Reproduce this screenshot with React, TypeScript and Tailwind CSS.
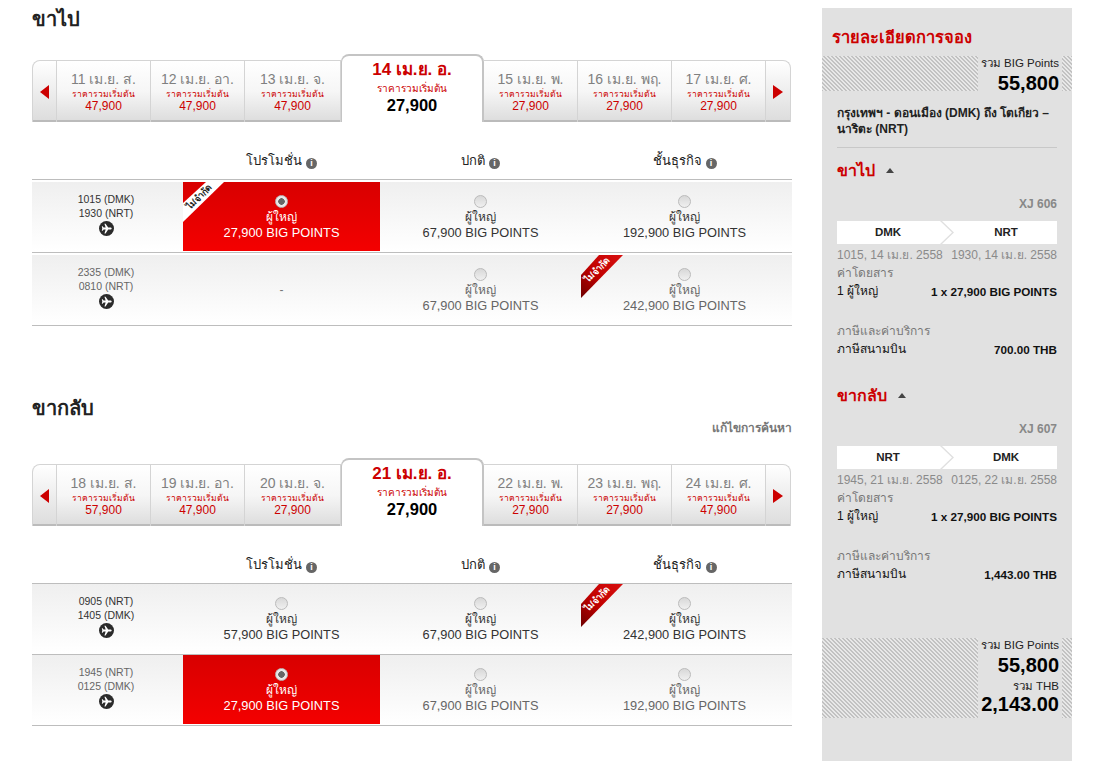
const sans = "font-['Liberation_Sans','Noto_Sans','Noto_Sans_CJK_SC',sans-serif]";

interface DayTab {
  label: string;
  price: string;
}

interface Fare {
  price?: string;
  selected?: boolean;
  ribbon?: boolean;
}

interface Flight {
  dep: string;
  arr: string;
  dim?: boolean;
  fares: Fare[];
}

// width of the three fare columns, they are not equal in the original
const fareWidths = ["w-[197px]", "w-[201px]", "w-[207px]"];

// small round plane badge used on each flight row
function PlaneBadge() {
  return (
    <svg width="15" height="15" viewBox="0 0 16 16" className="mx-auto block">
      <circle cx="8" cy="8" r="8" fill="#2b2b2b" />
      <path
        d="M13.500 8c0-.7-.7-1.100-1.400-1.100H9.800L7 2.800H5.800L7.100 6.900H4.900L3.900 5.600H3L3.500 8 3 10.400h.9l1-1.300h2.200L5.800 13.200H7l2.800-4.100h2.300c.7 0 1.400-.4 1.400-1.100z"
        fill="#fff"
      />
    </svg>
  );
}

function InfoDot() {
  return (
    <span className="ml-[4px] inline-flex h-[11px] w-[11px] items-center justify-center rounded-full bg-[#666] align-[-1px] text-[9px] font-bold leading-none text-white">
      i
    </span>
  );
}

function Arrow({ dir }: { dir: "left" | "right" }) {
  return (
    <svg width="10" height="14" viewBox="0 0 10 14">
      <path d={dir === "left" ? "M9 0v14L0 7z" : "M0 0v14l10-7z"} fill="#cc0000" />
    </svg>
  );
}

function DateStrip({ before, active, after }: { before: DayTab[]; active: DayTab; after: DayTab[] }) {
  const tab = (d: DayTab, i: number, w: string) => (
    <div
      key={i}
      className={`flex h-[61px] flex-col items-center border-r border-[#d4d4d4] pt-[10px] text-center ${w}`}
    >
      <div className="text-[14px] leading-[16px] text-[#808080]">{d.label}</div>
      <div className="mt-[2px] text-[8.5px] leading-[11px] text-[#cc0000]">ราคารวมเริ่มต้น</div>
      <div className="text-[12px] leading-[13px] text-[#c00]">{d.price}</div>
    </div>
  );

  return (
    <div className="flex h-[68px] w-[758px] items-end">
      <div className="flex h-[62px] w-[25px] shrink-0 items-center justify-center rounded-tl-[8px] border-t border-l border-r border-[#d4d4d4] bg-gradient-to-b from-white to-[#dcdcdc] shadow-[inset_0_-2px_0_#bbb]">
        <Arrow dir="left" />
      </div>
      <div className="flex h-[62px] border-t border-[#d4d4d4] bg-gradient-to-b from-white via-[#f6f6f6] to-[#dcdcdc] shadow-[inset_0_-2px_0_#bbb]">
        {before.map((d, i) => tab(d, i, i === 2 ? "w-[96px]" : "w-[94px]"))}
      </div>
      <div className="flex h-[68px] w-[143px] shrink-0 flex-col items-center rounded-t-[8px] border-t-2 border-r-2 border-l border-[#c4c4c4] bg-white pt-[4px] text-center">
        <div className="text-[17px] font-bold leading-[20px] text-[#cc0000]">{active.label}</div>
        <div className="mt-[2px] text-[10px] leading-[13px] text-[#cc0000]">ราคารวมเริ่มต้น</div>
        <div className="text-[16.5px] font-bold leading-[20px] text-black">{active.price}</div>
      </div>
      <div className="flex h-[62px] border-t border-[#d4d4d4] bg-gradient-to-b from-white via-[#f6f6f6] to-[#dcdcdc] shadow-[inset_0_-2px_0_#bbb]">
        {after.map((d, i) => tab(d, i, "w-[94px]"))}
      </div>
      <div className="flex h-[62px] w-[25px] shrink-0 items-center justify-center rounded-tr-[8px] border-t border-r border-[#d4d4d4] bg-gradient-to-b from-white to-[#dcdcdc] shadow-[inset_0_-2px_0_#bbb]">
        <Arrow dir="right" />
      </div>
    </div>
  );
}

function Ribbon({ selected }: { selected?: boolean }) {
  return (
    <div className="pointer-events-none absolute left-0 top-0 h-[44px] w-[46px] overflow-hidden">
      <svg width="46" height="44" viewBox="0 0 46 44" className="absolute left-0 top-0">
        <defs>
          <linearGradient id="ribbonRed" x1="0" y1="1" x2="1" y2="0">
            <stop offset="0" stopColor="#6e0000" />
            <stop offset="0.45" stopColor="#c00000" />
            <stop offset="1" stopColor="#d81010" />
          </linearGradient>
        </defs>
        {selected ? (
          <path d="M0 21L23 0H41L0 40z" fill="#fff" />
        ) : (
          <path d="M0 20L18 0H42L0 43z" fill="url(#ribbonRed)" />
        )}
      </svg>
      <span
        className={`absolute left-[-6px] top-[10px] w-[44px] -rotate-[45deg] text-center text-[9px] font-bold leading-[10px] ${
          selected ? "text-[#222]" : "text-white"
        }`}
      >
        ไม่จำกัด
      </span>
    </div>
  );
}

function FareCell({ fare, dim, width }: { fare: Fare; dim?: boolean; width: string }) {
  if (!fare.price) {
    return <div className={`flex h-full items-center justify-center text-[12px] text-[#777] ${width}`}>-</div>;
  }
  return (
    <div
      className={`relative flex h-[69px] flex-col items-center pt-[13px] text-center ${width} ${
        fare.selected ? "bg-gradient-to-b from-[#d80000] to-[#f40000] text-white" : dim ? "text-[#666]" : "text-[#333]"
      }`}
    >
      {fare.ribbon && <Ribbon selected={fare.selected} />}
      <span
        className={`h-[13px] w-[13px] rounded-full border border-[#bbb] ${
          fare.selected ? "bg-[radial-gradient(circle,#666_0,#666_3px,#e8e8e8_3.500px)]" : "bg-gradient-to-b from-[#d8d8d8] to-[#f0f0f0]"
        }`}
      />
      <div className="mt-[1px] text-[12px] leading-[16px]">ผู้ใหญ่</div>
      <div className="text-[12.8px] leading-[15px]">{fare.price} BIG POINTS</div>
    </div>
  );
}

function FlightRow({ flight, compact }: { flight: Flight; compact?: boolean }) {
  return (
    <div className={`flex items-start border-b border-[#bdbdbd] ${compact ? "h-[71px]" : "h-[73px] pt-[2px]"}`}>
      <div className="flex h-[69px] w-full bg-gradient-to-b from-[#efefef] to-white">
        <div className={`w-[148px] pt-[10px] text-center text-[10.5px] leading-[14px] ${flight.dim ? "text-[#666]" : "text-[#333]"}`}>
          <div>{flight.dep}</div>
          <div>{flight.arr}</div>
          <div className="pt-[1px]">
            <PlaneBadge />
          </div>
        </div>
        <div className="w-[3px]" />
        {flight.fares.map((fare, i) => (
          <FareCell key={i} fare={fare} dim={flight.dim} width={fareWidths[i]} />
        ))}
      </div>
    </div>
  );
}

function FareHeader() {
  return (
    <div className="flex h-[40px] items-center border-b border-[#bdbdbd] pt-[2px] text-[13px] text-[#222]">
      <div className="w-[151px]" />
      <div className={`text-center ${fareWidths[0]}`}>
        โปรโมชั่น
        <InfoDot />
      </div>
      <div className={`text-center ${fareWidths[1]}`}>
        ปกติ
        <InfoDot />
      </div>
      <div className={`text-center ${fareWidths[2]}`}>
        ชั้นธุรกิจ
        <InfoDot />
      </div>
    </div>
  );
}

function Hatch({ className }: { className: string }) {
  return (
    <div
      className={`bg-[repeating-linear-gradient(45deg,#c2c2c2_0,#c2c2c2_1.414px,#e8e8e8_1.414px,#e8e8e8_2.828px)] ${className}`}
    />
  );
}

function LegDetail(props: { title: string; flightNo: string; from: string; to: string; depTime: string; arrTime: string; tax: string }) {
  return (
    <div>
      <div className="flex items-center text-[16px] font-bold leading-[20px] text-[#cc0000]">
        {props.title}
        <span className="ml-[11px] mb-[2px] h-0 w-0 border-x-[4px] border-b-[5px] border-x-transparent border-b-[#444]" />
      </div>
      <div className="mt-[16px] text-right text-[12px] font-bold leading-[14px] text-[#888]">{props.flightNo}</div>
      <div className="relative mt-[10px] flex h-[23px] bg-white text-[11.5px] font-bold leading-[23px] text-[#222]">
        <div className="w-1/2 pr-[8px] text-center">{props.from}</div>
        <div className="w-1/2 pl-[8px] text-center">{props.to}</div>
        <svg width="16" height="23" viewBox="0 0 16 23" className="absolute left-[103px] top-0">
          <path d="M0 0h2l12 11.500L2 23H0l12-11.500z" fill="#e0e0e0" />
        </svg>
      </div>
      <div className="mt-[4px] flex justify-between text-[12px] leading-[15px] text-[#8a8a8a]">
        <span>{props.depTime}</span>
        <span>{props.arrTime}</span>
      </div>
      <div className="mt-[3px] text-[12px] leading-[15px] text-[#777]">ค่าโดยสาร</div>
      <div className="mt-[3px] flex justify-between text-[12px] leading-[15px] text-[#111]">
        <span>1 ผู้ใหญ่</span>
        <span className="text-[11.7px] font-bold">1 x 27,900 BIG POINTS</span>
      </div>
      <div className="mt-[25px] text-[12px] leading-[15px] text-[#777]">ภาษีและค่าบริการ</div>
      <div className="mt-[3px] flex justify-between text-[12px] leading-[15px] text-[#111]">
        <span>ภาษีสนามบิน</span>
        <span className="text-[11.7px] font-bold">{props.tax}</span>
      </div>
    </div>
  );
}

const outBefore: DayTab[] = [
  { label: "11 เม.ย. ส.", price: "47,900" },
  { label: "12 เม.ย. อา.", price: "47,900" },
  { label: "13 เม.ย. จ.", price: "47,900" },
];
const outAfter: DayTab[] = [
  { label: "15 เม.ย. พ.", price: "27,900" },
  { label: "16 เม.ย. พฤ.", price: "27,900" },
  { label: "17 เม.ย. ศ.", price: "27,900" },
];
const backBefore: DayTab[] = [
  { label: "18 เม.ย. ส.", price: "57,900" },
  { label: "19 เม.ย. อา.", price: "47,900" },
  { label: "20 เม.ย. จ.", price: "27,900" },
];
const backAfter: DayTab[] = [
  { label: "22 เม.ย. พ.", price: "27,900" },
  { label: "23 เม.ย. พฤ.", price: "27,900" },
  { label: "24 เม.ย. ศ.", price: "47,900" },
];

const outFlights: Flight[] = [
  {
    dep: "1015 (DMK)",
    arr: "1930 (NRT)",
    fares: [{ price: "27,900", selected: true, ribbon: true }, { price: "67,900" }, { price: "192,900" }],
  },
  {
    dep: "2335 (DMK)",
    arr: "0810 (NRT)",
    dim: true,
    fares: [{}, { price: "67,900" }, { price: "242,900", ribbon: true }],
  },
];
const backFlights: Flight[] = [
  {
    dep: "0905 (NRT)",
    arr: "1405 (DMK)",
    fares: [{ price: "57,900" }, { price: "67,900" }, { price: "242,900", ribbon: true }],
  },
  {
    dep: "1945 (NRT)",
    arr: "0125 (DMK)",
    dim: true,
    fares: [{ price: "27,900", selected: true }, { price: "67,900" }, { price: "192,900" }],
  },
];

export default function App() {
  return (
    <div className={`flex h-[761px] w-[1113px] overflow-hidden bg-white ${sans}`}>
      {/* Flights column */}
      <div className="ml-[32px] w-[760px]">
        <h2 className="mt-[7px] h-[47px] text-[20px] font-bold leading-[24px] text-[#222]">ขาไป</h2>
        <DateStrip before={outBefore} active={{ label: "14 เม.ย. อ.", price: "27,900" }} after={outAfter} />
        <div className="mt-[18px]">
          <FareHeader />
          {outFlights.map((f) => (
            <FlightRow key={f.dep} flight={f} />
          ))}
        </div>

        <h2 className="mt-[70px] h-[24px] text-[20px] font-bold leading-[24px] text-[#222]">ขากลับ</h2>
        <div className="mt-[1px] text-right text-[12px] font-bold leading-[14px] text-[#777]">แก้ไขการค้นหา</div>
        <div className="mt-[23px]">
          <DateStrip before={backBefore} active={{ label: "21 เม.ย. อ.", price: "27,900" }} after={backAfter} />
        </div>
        <div className="mt-[18px]">
          <FareHeader />
          {backFlights.map((f) => (
            <FlightRow key={f.dep} flight={f} compact />
          ))}
        </div>
      </div>

      {/* Booking summary */}
      <div className="ml-[30px] mt-[8px] flex h-[753px] w-[250px] flex-col bg-[#e1e1e1]">
        <div className="px-[10px] pt-[18px] text-[16.5px] font-bold leading-[22px] text-[#cc0000]">รายละเอียดการจอง</div>
        <div className="mt-[8px] flex h-[35px]">
          <Hatch className="w-[156px]" />
          <div className="w-[84px] pr-[3px] text-right">
            <div className="text-[11.5px] leading-[14px] text-[#222]">รวม BIG Points</div>
            <div className="text-[20px] font-bold leading-[26px] text-black">55,800</div>
          </div>
          <Hatch className="w-[10px]" />
        </div>
        <div className="mx-[15px] mt-[14px] border-b border-[#c8c8c8] pb-[10px] text-[12px] font-bold leading-[16px] text-[#222]">
          <div className="whitespace-nowrap">กรุงเทพฯ - ดอนเมือง (DMK) ถึง โตเกียว –</div>
          <div>นาริตะ (NRT)</div>
        </div>
        <div className="mx-[15px] mt-[13px]">
          <LegDetail title="ขาไป" flightNo="XJ 606" from="DMK" to="NRT" depTime="1015, 14 เม.ย. 2558" arrTime="1930, 14 เม.ย. 2558" tax="700.00 THB" />
        </div>
        <div className="mx-[15px] mt-[29px]">
          <LegDetail title="ขากลับ" flightNo="XJ 607" from="NRT" to="DMK" depTime="1945, 21 เม.ย. 2558" arrTime="0125, 22 เม.ย. 2558" tax="1,443.00 THB" />
        </div>
        <div className="mt-auto mb-[43px] flex h-[80px]">
          <Hatch className="w-[156px]" />
          <div className="w-[84px] pr-[3px] text-right">
            <div className="text-[11.5px] leading-[14px] text-[#222]">รวม BIG Points</div>
            <div className="text-[20px] font-bold leading-[26px] text-black">55,800</div>
            <div className="text-[11.5px] leading-[16px] text-[#222]">รวม THB</div>
            <div className="text-[20px] font-bold leading-[20px] text-black">2,143.00</div>
          </div>
          <Hatch className="w-[10px]" />
        </div>
      </div>
    </div>
  );
}
